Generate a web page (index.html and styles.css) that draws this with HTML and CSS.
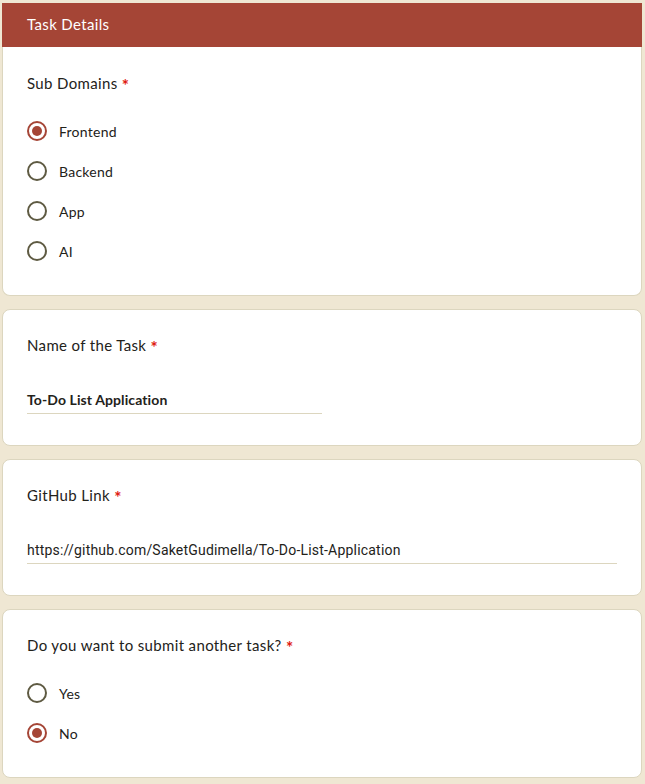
FILE: index.html
```html
<!DOCTYPE html>
<html>
<head>
<meta charset="utf-8">
<link rel="stylesheet" href="styles.css">
</head>
<body>
<div class="page">
  <section class="card card-first">
    <div class="card-header">Task Details</div>
    <div class="card-body">
      <div class="question">Sub Domains <span class="req">*</span></div>
      <div class="options">
        <div class="option"><span class="radio checked"></span><span class="label">Frontend</span></div>
        <div class="option"><span class="radio"></span><span class="label">Backend</span></div>
        <div class="option"><span class="radio"></span><span class="label">App</span></div>
        <div class="option"><span class="radio"></span><span class="label">AI</span></div>
      </div>
    </div>
  </section>
  <section class="card">
    <div class="card-body card-body-text">
      <div class="question">Name of the Task <span class="req">*</span></div>
      <div class="answer answer-short"><span class="answer-text bold">To-Do List Application</span></div>
    </div>
  </section>
  <section class="card">
    <div class="card-body card-body-text">
      <div class="question">GitHub Link <span class="req">*</span></div>
      <div class="answer answer-long"><span class="answer-text roboto">https://github.com/SaketGudimella/To-Do-List-Application</span></div>
    </div>
  </section>
  <section class="card">
    <div class="card-body">
      <div class="question">Do you want to submit another task? <span class="req">*</span></div>
      <div class="options">
        <div class="option"><span class="radio"></span><span class="label">Yes</span></div>
        <div class="option"><span class="radio checked"></span><span class="label">No</span></div>
      </div>
    </div>
  </section>
</div>
</body>
</html>
```
FILE: styles.css
```css
* { box-sizing: border-box; }
html, body { margin: 0; padding: 0; }
body {
  background: #efe7d3;
  font-family: "Lato", "Open Sans", sans-serif;
  color: #23221a;
  width: 645px;
  height: 784px;
  overflow: hidden;
}
.page {
  padding: 3px 3px 0 2px;
  display: flex;
  flex-direction: column;
  gap: 13px;
}
.card {
  background: #ffffff;
  border: 1px solid #dcd6bf;
  border-radius: 8px;
}
.card-first {
  border-top: none;
  border-radius: 0 0 8px 8px;
}
.card-header {
  background: #a54536;
  color: #ffffff;
  height: 44px;
  margin: 0 -1px;
  padding-left: 25px;
  font-size: 15px;
  line-height: 42px;
  letter-spacing: 0.35px;
}
.card-body {
  padding: 23px 24px 24px 24px;
}
.card-first .card-body { padding-top: 24px; }
.card-body-text { padding-bottom: 31px; }
.question {
  font-size: 15px;
  line-height: 24px;
  letter-spacing: 0.35px;
}
.req {
  color: #e0190f;
  font-size: 17px;
  font-weight: 700;
  letter-spacing: 0;
  line-height: 0;
  vertical-align: -3px;
}
.options {
  margin-top: 16px;
  display: flex;
  flex-direction: column;
}
.option {
  height: 40px;
  display: flex;
  align-items: center;
}
.radio {
  width: 20px;
  height: 20px;
  border: 2px solid #5e5a42;
  border-radius: 50%;
  margin-right: 12px;
  display: flex;
  align-items: center;
  justify-content: center;
}
.radio.checked { border-color: #a54536; }
.radio.checked::after {
  content: "";
  width: 10px;
  height: 10px;
  border-radius: 50%;
  background: #a54536;
}
.label { font-size: 14px; letter-spacing: 0.25px; }
.answer {
  margin-top: 33px;
  border-bottom: 1px solid #dcd6bf;
  padding-bottom: 3px;
  line-height: 20px;
  font-size: 14px;
}
.answer-short { width: 295px; }
.answer-long { width: 590px; }
.bold { font-weight: 700; letter-spacing: 0.1px; }
.roboto { font-family: "Roboto", sans-serif; letter-spacing: 0.2px; }
```
